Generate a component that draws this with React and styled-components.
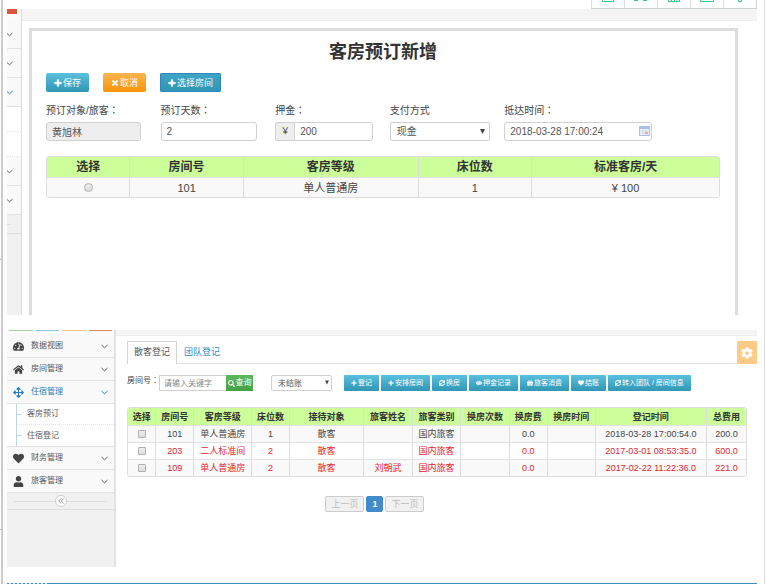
import React from 'react'
import styled, { createGlobalStyle, css } from 'styled-components'
import {
  FaTachometerAlt,
  FaHome,
  FaArrowsAlt,
  FaHeart,
  FaUser,
  FaPlus,
  FaTimes,
  FaSearch,
  FaSync,
  FaEye,
  FaGift,
  FaCog,
} from 'react-icons/fa'

const menu = [
  { icon: FaTachometerAlt, label: '数据视图' },
  { icon: FaHome, label: '房间管理' },
  { icon: FaArrowsAlt, label: '住宿管理', open: true, children: ['客房预订', '住宿登记'] },
  { icon: FaHeart, label: '财务管理' },
  { icon: FaUser, label: '旅客管理' },
]

const actions = [
  { icon: FaPlus, label: '登记' },
  { icon: FaPlus, label: '安排房间' },
  { icon: FaSync, label: '换房' },
  { icon: FaEye, label: '押金记录' },
  { icon: FaGift, label: '旅客消费' },
  { icon: FaHeart, label: '结账' },
  { icon: FaSync, label: '转入团队 / 房间信息' },
]

const roomColumns = [
  ['选择', '12.4%'],
  ['房间号', '16.9%'],
  ['客房等级', '26%'],
  ['床位数', '16.9%'],
  ['标准客房/天', '27.8%'],
]

const guestColumns = [
  ['选择', '4.6%'],
  ['房间号', '6.1%'],
  ['客房等级', '9.4%'],
  ['床位数', '6.1%'],
  ['接待对象', '12%'],
  ['旅客姓名', '7.9%'],
  ['旅客类别', '7.8%'],
  ['换房次数', '7.9%'],
  ['换房费', '6.1%'],
  ['换房时间', '7.8%'],
  ['登记时间', '18%'],
  ['总费用', '6.3%'],
]

const guests = [
  { cells: ['101', '单人普通房', '1', '散客', '', '国内旅客', '', '0.0', '', '2018-03-28 17:00:54.0', '200.0'] },
  { red: true, cells: ['203', '二人标准间', '2', '散客', '', '国内旅客', '', '0.0', '', '2017-03-01 08:53:35.0', '600.0'] },
  { red: true, cells: ['109', '单人普通房', '2', '散客', '刘朝武', '国内旅客', '', '0.0', '', '2017-02-22 11:22:36.0', '221.0'] },
]

function Chevron() {
  return (
    <svg width="7" height="5" viewBox="0 0 7 5" fill="none" stroke="currentColor">
      <path d="M0.5 1 L3.5 3.8 L6.5 1" />
    </svg>
  )
}

function Tools() {
  return (
    <ToolBar>
      <button aria-label="image"><svg width="14" height="2"><path d="M1.5 0V1.5H12.5V0" /></svg></button>
      <button aria-label="blocks"><svg width="14" height="2"><path d="M0 0.5H4M9 0.5H13" /></svg></button>
      <button aria-label="table"><svg width="14" height="2"><path d="M1.5 0V1.5H12.5V0M4.5 0V1.5M7.5 0V1.5M10 0V1.5" /></svg></button>
      <button aria-label="card"><svg width="14" height="2"><path d="M0.5 0V1.5H13.5V0" /></svg></button>
      <button aria-label="pin"><svg width="14" height="2"><path d="M5.5 0V1.5H8.5V0" /></svg></button>
    </ToolBar>
  )
}

function BookingPanel() {
  return (
    <Panel $rail="15px" $height="306px">
      <Rail>
        <RailMark />
        <RailRow><Chevron /></RailRow>
        <RailRow><Chevron /></RailRow>
        <RailRow $active><Chevron /></RailRow>
        <RailSub />
        <RailSub />
        <RailRow><Chevron /></RailRow>
        <RailRow><Chevron /></RailRow>
        <RailFoot><span /></RailFoot>
      </Rail>
      <Main>
        <Crumbs $height="12px" />
        <Box>
          <h1>客房预订新增</h1>
          <ButtonRow>
            <Button><FaPlus />保存</Button>
            <Button $color="orange"><FaTimes />取消</Button>
            <Button $color="dark"><FaPlus />选择房间</Button>
          </ButtonRow>
          <Form>
            <Field $width="95px">
              <label htmlFor="guest">预订对象/旅客：</label>
              <Input id="guest" defaultValue="黄旭林" readOnly />
            </Field>
            <Field $width="96px">
              <label htmlFor="days">预订天数：</label>
              <Input id="days" defaultValue="2" />
            </Field>
            <Field $width="98px">
              <label htmlFor="deposit">押金：</label>
              <Group>
                <span>￥</span>
                <Input id="deposit" defaultValue="200" />
              </Group>
            </Field>
            <Field $width="100px">
              <label htmlFor="pay">支付方式</label>
              <SelectWrap>
                <Select id="pay"><option>现金</option></Select>
                <Caret viewBox="0 0 5 5"><path d="M0 0H5L2.5 5Z" /></Caret>
              </SelectWrap>
            </Field>
            <Field $width="148px">
              <label htmlFor="arrive">抵达时间：</label>
              <SelectWrap>
                <Input id="arrive" defaultValue="2018-03-28 17:00:24" />
                <Calendar viewBox="0 0 11 10">
                  <rect width="11" height="10" rx="1" fill="#a9bfe6" />
                  <rect x="1" y="3" width="9" height="6" fill="#eef2fb" />
                  <path d="M1 5H10M1 7H10M4 3V9M7 3V9" stroke="#c3cfe8" strokeWidth="0.6" />
                  <rect x="6" y="6" width="3" height="2" fill="#eda79a" />
                </Calendar>
              </SelectWrap>
            </Field>
          </Form>
          <Table $row="20px" $head="12px" $text="11px">
            <thead>
              <tr>{roomColumns.map(([name, width]) => <Th key={name} $width={width}>{name}</Th>)}</tr>
            </thead>
            <tbody>
              <Tr>
                <td><Tick type="radio" name="room" aria-label="101" /></td>
                <td>101</td>
                <td>单人普通房</td>
                <td>1</td>
                <td>¥ 100</td>
              </Tr>
            </tbody>
          </Table>
        </Box>
      </Main>
    </Panel>
  )
}

function Sidebar() {
  return (
    <Side>
      <Shortcuts><i /><i /><i /><i /></Shortcuts>
      {menu.map(({ icon: Icon, label, open, children }) => (
        <React.Fragment key={label}>
          <MenuItem href="#" $active={open}>
            <Icon />
            <span>{label}</span>
            <Chevron />
          </MenuItem>
          {children && (
            <SubMenu>
              {children.map((c) => <a href="#" key={c}>{c}</a>)}
            </SubMenu>
          )}
        </React.Fragment>
      ))}
      <Collapse>
        <button aria-label="collapse">
          <svg width="6" height="6" viewBox="0 0 6 6" fill="none" stroke="#999">
            <path d="M3 0.5L0.8 3L3 5.5M5.5 0.5L3.3 3L5.5 5.5" />
          </svg>
        </button>
      </Collapse>
    </Side>
  )
}

function GuestPanel() {
  return (
    <Panel $rail="109px" $height="237px">
      <Sidebar />
      <Main>
        <Crumbs $height="6px" />
        <Gear aria-label="settings"><FaCog /></Gear>
        <Content>
          <Tabs>
            <Tab href="#" $active>散客登记</Tab>
            <Tab href="#">团队登记</Tab>
          </Tabs>
          <Filter>
            <label htmlFor="room">房间号：</label>
            <SearchInput id="room" placeholder="请输入关键字" />
            <SearchButton><FaSearch />查询</SearchButton>
            <SelectWrap $small>
              <Select aria-label="状态" $small><option>未结账</option></Select>
              <Caret $small viewBox="0 0 5 5"><path d="M0 0H5L2.5 5Z" /></Caret>
            </SelectWrap>
            <Actions>
              {actions.map(({ icon: Icon, label }) => (
                <Button $small key={label}><Icon />{label}</Button>
              ))}
            </Actions>
          </Filter>
          <Table $row="17px" $head="9px" $text="9px" $inset>
            <thead>
              <tr>{guestColumns.map(([name, width]) => <Th key={name} $width={width}>{name}</Th>)}</tr>
            </thead>
            <tbody>
              {guests.map(({ red, cells }) => (
                <Tr key={cells[0]} $red={red}>
                  <td><Tick type="checkbox" aria-label={cells[0]} /></td>
                  {cells.map((c, i) => <td key={i}>{c}</td>)}
                </Tr>
              ))}
            </tbody>
          </Table>
          <Pager>
            <button disabled>上一页</button>
            <button className="current">1</button>
            <button disabled>下一页</button>
          </Pager>
        </Content>
      </Main>
    </Panel>
  )
}

function App() {
  return (
    <Page>
      <Global />
      <Gutter><i /><i /><i /></Gutter>
      <Frame>
        <Tools />
        <BookingPanel />
        <GuestPanel />
        <NextBar><i /></NextBar>
      </Frame>
    </Page>
  )
}

export default App

const font = '"Liberation Sans", "Noto Sans CJK SC", sans-serif'
// the TC face centres the full-width colon
const labelFont = '"Liberation Sans", "Noto Sans CJK TC", sans-serif'

const Global = createGlobalStyle`
  * { box-sizing: border-box; }
  body { margin: 0; background: #fff; overflow: hidden; }
  body, button, input, select { font-family: ${font}; }
  label { font-family: ${labelFont}; }
  h1, p { margin: 0; }
  a { text-decoration: none; }
`

const Page = styled.div`
  display: flex;
  height: 100vh;
  color: #444;
`

const Gutter = styled.div`
  display: grid;
  grid-template-rows: 260px 270px 1fr;
  width: 1px;
  i { border-bottom: 1px solid #bbb; }
  i:last-child { border: 0; }
`

const Frame = styled.div`
  position: relative;
  display: flex;
  flex-direction: column;
  flex: 1;
  gap: 15px;
  min-width: 0;
  margin-right: 1px;
  padding: 9px 7px 0 4px;
  border-left: 2px solid #ccc;
  border-right: 1px solid #ddd;
  overflow: hidden;
`

const ToolBar = styled.div`
  position: absolute;
  top: 0;
  right: 7px;
  display: flex;
  border-right: 1px solid #ccd2d2;
  border-bottom: 1px solid #ccd2d2;
  background: #fff;
  button {
    display: flex;
    justify-content: center;
    width: 33px;
    height: 8px;
    padding: 0;
    border: 0;
    border-left: 1px solid #ddd;
    background: #fff;
  }
  svg {
    fill: none;
    stroke: #2ecc85;
  }
`

const Panel = styled.section`
  display: grid;
  grid-template-columns: ${(p) => p.$rail} 1fr;
  flex: none;
  height: ${(p) => p.$height};
  overflow: hidden;
`

const Rail = styled.aside`
  background: #f1f1f1;
  border-right: 1px solid #ddd;
`

const RailMark = styled.div`
  height: 11px;
  background: linear-gradient(#d9573f, #d9573f) 0 0 / 10px 5px no-repeat #fafafa;
`

const RailRow = styled.div`
  display: flex;
  align-items: center;
  height: 29px;
  border-bottom: 1px solid #e2e2e2;
  background: #f9f9f9;
  color: ${(p) => (p.$active ? '#2b7dbc' : '#666')};
  svg { margin-left: -1px; }
`

const RailSub = styled.div`
  height: 25px;
  border-bottom: 1px dotted #e4e4e4;
  background: #fff;
`

const RailFoot = styled.div`
  display: flex;
  align-items: center;
  height: 19px;
  border-bottom: 1px solid #ddd;
  span {
    width: 4px;
    border-top: 1px solid #ddd;
  }
`

const Main = styled.main`
  position: relative;
  min-width: 0;
  background: #fff;
`

const Crumbs = styled.div`
  height: ${(p) => p.$height};
  background: #f5f5f5;
  border-bottom: 1px solid #eee;
`

const Box = styled.div`
  height: 100%;
  margin: 7px 19px 0 7px;
  padding: 9px 15px 0 14px;
  border: 3px solid #ddd;
  h1 {
    color: #333;
    font-size: 18px;
    line-height: 24px;
    text-align: center;
  }
`

const ButtonRow = styled.div`
  display: flex;
  gap: 14px;
  margin: 9px 0 12px;
`

const fills = {
  blue: 'linear-gradient(#5bc0de, #2f96b4)',
  orange: 'linear-gradient(#fbb450, #f89406)',
  dark: 'linear-gradient(#3fa5c4, #2f96b4)',
}

const Button = styled.button`
  display: flex;
  align-items: center;
  justify-content: center;
  gap: 1px;
  height: 19px;
  padding: 0 8px;
  border: 0;
  border-radius: 2px;
  background: ${(p) => fills[p.$color || 'blue']};
  box-shadow: inset 0 0 0 1px ${(p) => (p.$color === 'dark' ? '#2f86c0' : 'transparent')};
  color: #fff;
  font-size: 9px;
  line-height: 12px;
  white-space: nowrap;
  svg {
    width: 8px;
    height: 8px;
  }
  path {
    stroke: currentColor;
    stroke-width: 40;
  }
  ${(p) => p.$small && css`
    height: 16px;
    padding: 0 7px;
    border-radius: 1px;
    font-size: 7px;
    svg {
      width: 6px;
      height: 6px;
    }
    path { stroke-width: 16; }
  `}
`

const Form = styled.div`
  display: grid;
  grid-template-columns: repeat(4, 17%) 1fr;
  margin-bottom: 15px;
`

const Field = styled.div`
  width: ${(p) => p.$width};
  label {
    display: block;
    margin-bottom: 4px;
    font-size: 10px;
    line-height: 14px;
    white-space: nowrap;
  }
`

const Input = styled.input`
  display: block;
  width: 100%;
  height: 19px;
  padding: 0 5px;
  border: 1px solid #d0d0d0;
  border-radius: 3px;
  background: ${(p) => (p.readOnly ? '#eee' : '#fff')};
  color: #555;
  font-size: 10px;
  outline: none;
`

const Group = styled.div`
  display: flex;
  span {
    flex: none;
    width: 19px;
    border: 1px solid #d0d0d0;
    border-right: 0;
    border-radius: 3px 0 0 3px;
    background: #eee;
    font-size: 9px;
    line-height: 17px;
    text-align: center;
  }
  ${Input} {
    min-width: 0;
    border-radius: 0 3px 3px 0;
  }
`

const SelectWrap = styled.div`
  position: relative;
  ${(p) => p.$small && css`
    width: 61px;
    margin: 0 12px 0 18px;
  `}
`

const Select = styled.select`
  display: block;
  width: 100%;
  height: ${(p) => (p.$small ? '16px' : '19px')};
  padding: 0 6px;
  border: 1px solid #d0d0d0;
  border-radius: 2px;
  background: #fff;
  color: #555;
  font-size: ${(p) => (p.$small ? '8px' : '10px')};
  appearance: none;
`

const Caret = styled.svg`
  position: absolute;
  top: ${(p) => (p.$small ? '5px' : '7px')};
  right: ${(p) => (p.$small ? '3px' : '5px')};
  width: ${(p) => (p.$small ? '4px' : '5px')};
  height: 5px;
  fill: #444;
`

const Calendar = styled.svg`
  position: absolute;
  top: 4px;
  right: 2px;
  width: 11px;
  height: 10px;
`

const Table = styled.table`
  width: ${(p) => (p.$inset ? 'calc(100% - 10px)' : '100%')};
  table-layout: fixed;
  border: 1px solid #ddd;
  border-radius: 3px;
  border-spacing: 0;
  overflow: hidden;
  font-size: ${(p) => p.$text};
  text-align: center;
  white-space: nowrap;
  th, td {
    height: ${(p) => p.$row};
    padding: 0;
    line-height: 14px;
    border-right: 1px solid #ddd;
  }
  th:last-child, td:last-child { border-right: 0; }
  th {
    background: #cf9;
    color: #333;
    font-size: ${(p) => p.$head};
  }
  td { border-top: 1px solid #e2e2e2; }
`

const Th = styled.th`
  width: ${(p) => p.$width};
`

const Tr = styled.tr`
  color: ${(p) => (p.$red ? '#e4252f' : '#444')};
  &:nth-child(odd) { background: #f9f9f9; }
`

const Tick = styled.input`
  display: block;
  width: ${(p) => (p.type === 'radio' ? '9px' : '8px')};
  height: ${(p) => (p.type === 'radio' ? '9px' : '8px')};
  margin: 0 auto;
  border: 1px solid #b0b0b0;
  border-radius: ${(p) => (p.type === 'radio' ? '50%' : '1px')};
  background: linear-gradient(#eee, #ddd);
  appearance: none;
`

const Side = styled.aside`
  display: flex;
  flex-direction: column;
  background: #f1f1f1;
  border-right: 2px solid #e2e2e2;
`

const Shortcuts = styled.div`
  display: grid;
  grid-template-columns: repeat(4, 1fr);
  gap: 3px;
  height: 5px;
  padding: 0 2px;
  background: #fafafa;
  i { height: 1px; background: #a5cba0; }
  i:nth-child(2) { background: #93c6e6; }
  i:nth-child(3) { background: #f5c983; }
  i:nth-child(4) { background: #d98677; }
`

const MenuItem = styled.a`
  display: flex;
  align-items: center;
  height: 23px;
  padding: 0 6px;
  border-bottom: 1px solid #e2e2e2;
  background: #f9f9f9;
  color: ${(p) => (p.$active ? '#2b7dbc' : '#585858')};
  font-size: 8px;
  line-height: 12px;
  > svg:first-child {
    width: 11px;
    height: 11px;
    color: ${(p) => (p.$active ? '#2b7dbc' : '#444')};
  }
  span {
    flex: 1;
    margin-left: 7px;
  }
`

const SubMenu = styled.div`
  background: #fff;
  border-bottom: 1px solid #e2e2e2;
  a {
    display: flex;
    align-items: center;
    height: 21px;
    margin-left: 9px;
    border-left: 1px solid #bcd4e5;
    border-bottom: 1px dotted #e4e4e4;
    color: #616161;
    font-size: 8px;
    line-height: 12px;
  }
  a::before {
    content: '';
    width: 4px;
    margin-right: 6px;
    border-top: 1px solid #bcd4e5;
  }
  a:last-child { border-bottom: 0; }
`

const Collapse = styled.div`
  display: flex;
  align-items: center;
  height: 17px;
  padding: 0 7px;
  border-bottom: 1px solid #ddd;
  &::before, &::after {
    content: '';
    flex: 1;
    border-top: 1px solid #ddd;
  }
  button {
    display: flex;
    align-items: center;
    justify-content: center;
    width: 12px;
    height: 12px;
    padding: 0;
    border: 1px solid #ccc;
    border-radius: 50%;
    background: #fff;
  }
`

const Gear = styled.button`
  position: absolute;
  top: 11px;
  right: 0;
  display: flex;
  align-items: center;
  justify-content: center;
  width: 20px;
  height: 23px;
  padding: 0;
  border: 0;
  border-radius: 2px 0 0 2px;
  background: #ffca85;
  color: #fff;
  font-size: 12px;
`

const Content = styled.div`
  padding: 5px 0 0 11px;
`

const Tabs = styled.nav`
  display: flex;
  height: 23px;
  border-bottom: 1px solid #e2e2e2;
`

const Tab = styled.a`
  height: 23px;
  padding: 0 6px;
  border: 1px solid ${(p) => (p.$active ? '#d5d5d5' : 'transparent')};
  border-bottom: 0;
  background: ${(p) => (p.$active ? '#fff' : 'transparent')};
  color: ${(p) => (p.$active ? '#555' : '#2f8ac9')};
  font-size: 9px;
  line-height: 21px;
`

const Filter = styled.div`
  display: flex;
  margin: 11px 0 16px;
  font-size: 8px;
  label {
    line-height: 12px;
    white-space: nowrap;
  }
`

const SearchInput = styled.input`
  width: 67px;
  height: 16px;
  padding: 0 4px;
  border: 1px solid #d0d0d0;
  border-right: 0;
  color: #555;
  font-size: 8px;
  outline: none;
  &::placeholder { color: #888; }
`

const SearchButton = styled.button`
  display: flex;
  align-items: center;
  justify-content: center;
  gap: 1px;
  width: 27px;
  height: 16px;
  padding: 0;
  border: 0;
  background: linear-gradient(#5eb95e, #46a046);
  color: #fff;
  font-size: 8px;
  line-height: 12px;
  white-space: nowrap;
  svg {
    width: 7px;
    height: 7px;
  }
`

const Actions = styled.div`
  display: flex;
  gap: 2px;
`

const Pager = styled.div`
  display: flex;
  gap: 2px;
  margin-top: 19px;
  padding-left: 31.5%;
  button {
    height: 16px;
    padding: 0 5px;
    border: 1px solid #ccc;
    border-radius: 2px;
    background: #f1f1f1;
    color: #bbb;
    font-size: 9px;
    line-height: 14px;
  }
  .current {
    border-color: #428bca;
    background: #428bca;
    color: #fff;
    font-weight: bold;
  }
`

const NextBar = styled.footer`
  flex: none;
  height: 1px;
  margin-top: 1px;
  background: #438eb9;
  i {
    display: block;
    width: 42px;
    height: 1px;
    background: repeating-linear-gradient(90deg, #438eb9 0 2px, #cfe3ee 2px 4px);
  }
`
